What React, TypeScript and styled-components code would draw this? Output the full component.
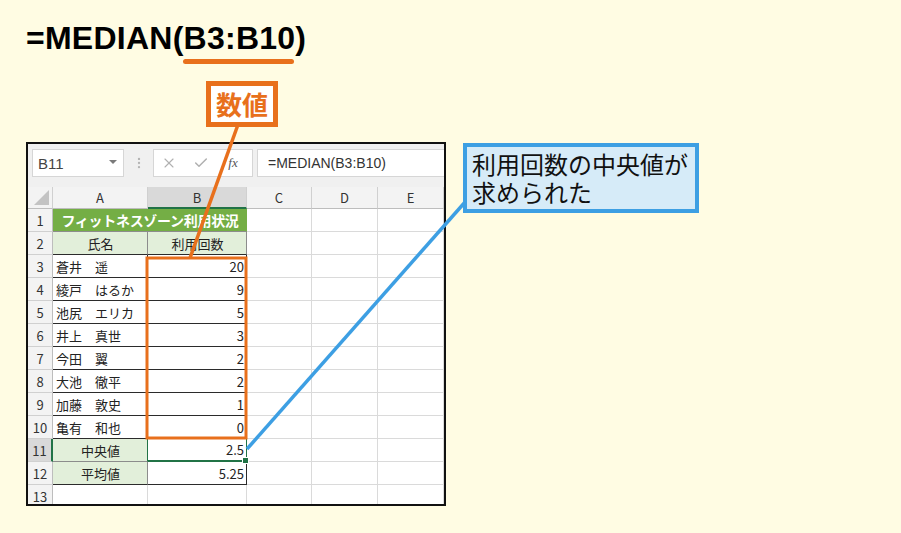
import React from 'react'
import styled, { createGlobalStyle } from 'styled-components'
import { X, Check, EllipsisVertical } from 'lucide-react'

const ORANGE = '#e8701c'
const BLUE = '#3d9fe3'
const XL_GREEN = '#217346'
const JP = '"Noto Sans CJK JP", "Noto Sans", sans-serif'

const GlobalStyle = createGlobalStyle`
  body {
    margin: 0;
    background: #fffce3;
  }
`

const Page = styled.div`
  position: relative;
  width: 901px;
  height: 533px;
  box-sizing: border-box;
  padding: 22px 0 0 26px;
  background: #fffce3;
  overflow: hidden;
`

const Formula = styled.h1`
  margin: 0;
  height: 32px;
  font: 700 32px/32px "Liberation Sans", Arial, sans-serif;
  letter-spacing: 0.25px;
  color: #000;
`

// the argument range, marked with an orange bar below it
const Argument = styled.span`
  position: relative;

  &::after {
    content: '';
    position: absolute;
    left: -1px;
    right: 1px;
    bottom: -8px;
    height: 5px;
    border-radius: 3px;
    background: ${ORANGE};
  }
`

const Sheet = styled.div`
  margin-top: 88px;
  width: 420px;
  height: 364px;
  box-sizing: border-box;
  border: 2px solid #111;
  background: #f0f0f0;
  overflow: hidden;
`

const Toolbar = styled.div`
  display: flex;
  align-items: center;
  height: 28px;
  padding: 5px 0 0 4px;
  margin-bottom: 10px;
`

const NameBox = styled.div`
  width: 92px;
  height: 28px;
  box-sizing: border-box;
  display: flex;
  align-items: center;
  justify-content: space-between;
  padding: 0 6px 0 5px;
  background: #fff;
  border: 1px solid #d6d6d6;
  font: 15px "Liberation Sans", Arial, sans-serif;
  color: #444;
`

const DropArrow = styled.span`
  width: 0;
  height: 0;
  border-left: 4px solid transparent;
  border-right: 4px solid transparent;
  border-top: 4px solid #7a7a7a;
  margin-top: -2px;
`

const Divider = styled.div`
  width: 29px;
  display: flex;
  justify-content: center;
  color: #b4b4b4;
`

const FuncBox = styled.div`
  width: 100px;
  height: 28px;
  box-sizing: border-box;
  display: flex;
  align-items: center;
  gap: 16px;
  padding-left: 7px;
  background: #fff;
  border: 1px solid #d6d6d6;
  color: #b0b0b0;
`

const FxMark = styled.span`
  width: 16px;
  text-align: center;
  font: italic 13px "Liberation Serif", serif;
  color: #555;
`

const FormulaBox = styled.div`
  flex: 1;
  height: 28px;
  box-sizing: border-box;
  margin-left: 4px;
  display: flex;
  align-items: center;
  padding-left: 10px;
  background: #fff;
  border: 1px solid #d6d6d6;
  border-right: none;
  font: 14px "Liberation Sans", Arial, sans-serif;
  color: #333;
  white-space: nowrap;
`

const Grid = styled.div`
  display: grid;
  grid-template-columns: 25px 95px 99px 65px 66px 66px;
  grid-template-rows: 22px repeat(13, 23px);
  background: #fff;
  font-family: ${JP};
`

const Corner = styled.div`
  position: relative;
  box-sizing: border-box;
  background: #f3f3f3;
  border-right: 1px solid #d0d0d0;
  border-bottom: 1px solid #bdbdbd;

  &::after {
    content: '';
    position: absolute;
    right: 3px;
    bottom: 3px;
    border-left: 15px solid transparent;
    border-bottom: 15px solid #c3c3c3;
  }
`

const ColHead = styled.div<{ $active?: boolean }>`
  box-sizing: border-box;
  display: flex;
  align-items: center;
  justify-content: center;
  background: ${p => (p.$active ? '#d9d9d9' : '#f3f3f3')};
  border-right: 1px solid #d0d0d0;
  border-bottom: ${p => (p.$active ? `2px solid ${XL_GREEN}` : '1px solid #bdbdbd')};
  font-size: 13px;
  color: #333;
`

const RowHead = styled.div<{ $active?: boolean }>`
  box-sizing: border-box;
  display: flex;
  align-items: center;
  justify-content: center;
  background: ${p => (p.$active ? '#d9d9d9' : '#f3f3f3')};
  border-right: ${p => (p.$active ? `2px solid ${XL_GREEN}` : '1px solid #bdbdbd')};
  border-bottom: 1px solid #d0d0d0;
  font-size: 13px;
  color: #333;
`

const Cell = styled.div<{
  $bg?: string
  $align?: 'left' | 'center' | 'right'
  $right?: string
  $bottom?: string
  $span?: number
}>`
  box-sizing: border-box;
  display: flex;
  align-items: center;
  justify-content: ${p => (p.$align === 'right' ? 'flex-end' : p.$align === 'center' ? 'center' : 'flex-start')};
  padding: 0 2px 0 3px;
  grid-column: ${p => (p.$span ? `span ${p.$span}` : 'auto')};
  background: ${p => p.$bg || '#fff'};
  border-right: 1px solid ${p => p.$right || '#dadada'};
  border-bottom: 1px solid ${p => p.$bottom || '#dadada'};
  font-size: 13px;
  color: #222;
  white-space: nowrap;
`

const TitleCell = styled(Cell)`
  font-weight: 700;
  font-size: 14px;
  letter-spacing: -0.3px;
  color: #fff;
`

const ActiveCell = styled(Cell)`
  position: relative;
  border-bottom: 2px solid ${XL_GREEN};

  &::after {
    content: '';
    position: absolute;
    right: -3px;
    bottom: -4px;
    width: 5px;
    height: 5px;
    background: ${XL_GREEN};
    border: 1px solid #fff;
  }
`

const Overlay = styled.svg`
  position: absolute;
  left: 0;
  top: 0;
  pointer-events: none;
`

const ValueLabel = styled.div`
  position: absolute;
  left: 206px;
  top: 81px;
  height: 36px;
  padding: 0 5px;
  background: #fff;
  border: 5px solid ${ORANGE};
  font: 700 26px/36px ${JP};
  color: ${ORANGE};
`

const Note = styled.div`
  position: absolute;
  left: 463px;
  top: 143px;
  width: 236px;
  height: 70px;
  box-sizing: border-box;
  padding: 3px 5px;
  background: #d6ebf8;
  border: 4px solid ${BLUE};
  font: 400 24px/28px ${JP};
  color: #111;
`

const GREEN = '#74ae45'
const PALE = '#e2efda'
const DARK = '#2b2b2b'
const MID = '#8c8c8c'

const members: [string, number][] = [
  ['蒼井　遥', 20],
  ['綾戸　はるか', 9],
  ['池尻　エリカ', 5],
  ['井上　真世', 3],
  ['今田　翼', 2],
  ['大池　徹平', 2],
  ['加藤　敦史', 1],
  ['亀有　和也', 0],
]

const EmptyCols: React.FC = () => (
  <>
    <Cell />
    <Cell />
    <Cell />
  </>
)

const App: React.FC = () => {
  return (
    <Page>
      <GlobalStyle />
      <Formula>
        =MEDIAN(<Argument>B3:B10</Argument>)
      </Formula>

      <Sheet>
        <Toolbar>
          <NameBox>
            B11
            <DropArrow />
          </NameBox>
          <Divider>
            <EllipsisVertical size={14} strokeWidth={2} />
          </Divider>
          <FuncBox>
            <X size={16} strokeWidth={1.6} />
            <Check size={16} strokeWidth={2.2} />
            <FxMark>fx</FxMark>
          </FuncBox>
          <FormulaBox>=MEDIAN(B3:B10)</FormulaBox>
        </Toolbar>

        <Grid>
          <Corner />
          <ColHead>A</ColHead>
          <ColHead $active>B</ColHead>
          <ColHead>C</ColHead>
          <ColHead>D</ColHead>
          <ColHead>E</ColHead>

          <RowHead>1</RowHead>
          <TitleCell $span={2} $bg={GREEN} $align="center" $right={GREEN} $bottom={MID}>
            フィットネスゾーン利用状況
          </TitleCell>
          <EmptyCols />

          <RowHead>2</RowHead>
          <Cell $bg={PALE} $align="center" $right={MID} $bottom={DARK}>氏名</Cell>
          <Cell $bg={PALE} $align="center" $right={MID} $bottom={DARK}>利用回数</Cell>
          <EmptyCols />

          {members.map(([name, count], i) => (
            <React.Fragment key={name}>
              <RowHead>{i + 3}</RowHead>
              <Cell $right={DARK} $bottom={DARK}>{name}</Cell>
              <Cell $align="right" $right={DARK} $bottom={DARK}>{count}</Cell>
              <EmptyCols />
            </React.Fragment>
          ))}

          <RowHead $active>11</RowHead>
          <Cell $bg={PALE} $align="center" $right={XL_GREEN} $bottom={MID}>中央値</Cell>
          <ActiveCell $align="right" $right={XL_GREEN}>2.5</ActiveCell>
          <EmptyCols />

          <RowHead>12</RowHead>
          <Cell $bg={PALE} $align="center" $right={MID} $bottom={DARK}>平均値</Cell>
          <Cell $align="right" $right={DARK} $bottom={DARK}>5.25</Cell>
          <EmptyCols />

          <RowHead>13</RowHead>
          <Cell />
          <Cell />
          <EmptyCols />
        </Grid>
      </Sheet>

      <Overlay width={901} height={533} viewBox="0 0 901 533">
        <rect x={147} y={258} width={99} height={180} fill="none" stroke={ORANGE} strokeWidth={3} />
        <line x1={237.5} y1={126} x2={190} y2={258} stroke={ORANGE} strokeWidth={3.5} />
        <line x1={466} y1={201} x2={247} y2={449} stroke={BLUE} strokeWidth={3.5} />
      </Overlay>

      <ValueLabel>数値</ValueLabel>
      <Note>
        利用回数の中央値が
        <br />
        求められた
      </Note>
    </Page>
  )
}

export default App
